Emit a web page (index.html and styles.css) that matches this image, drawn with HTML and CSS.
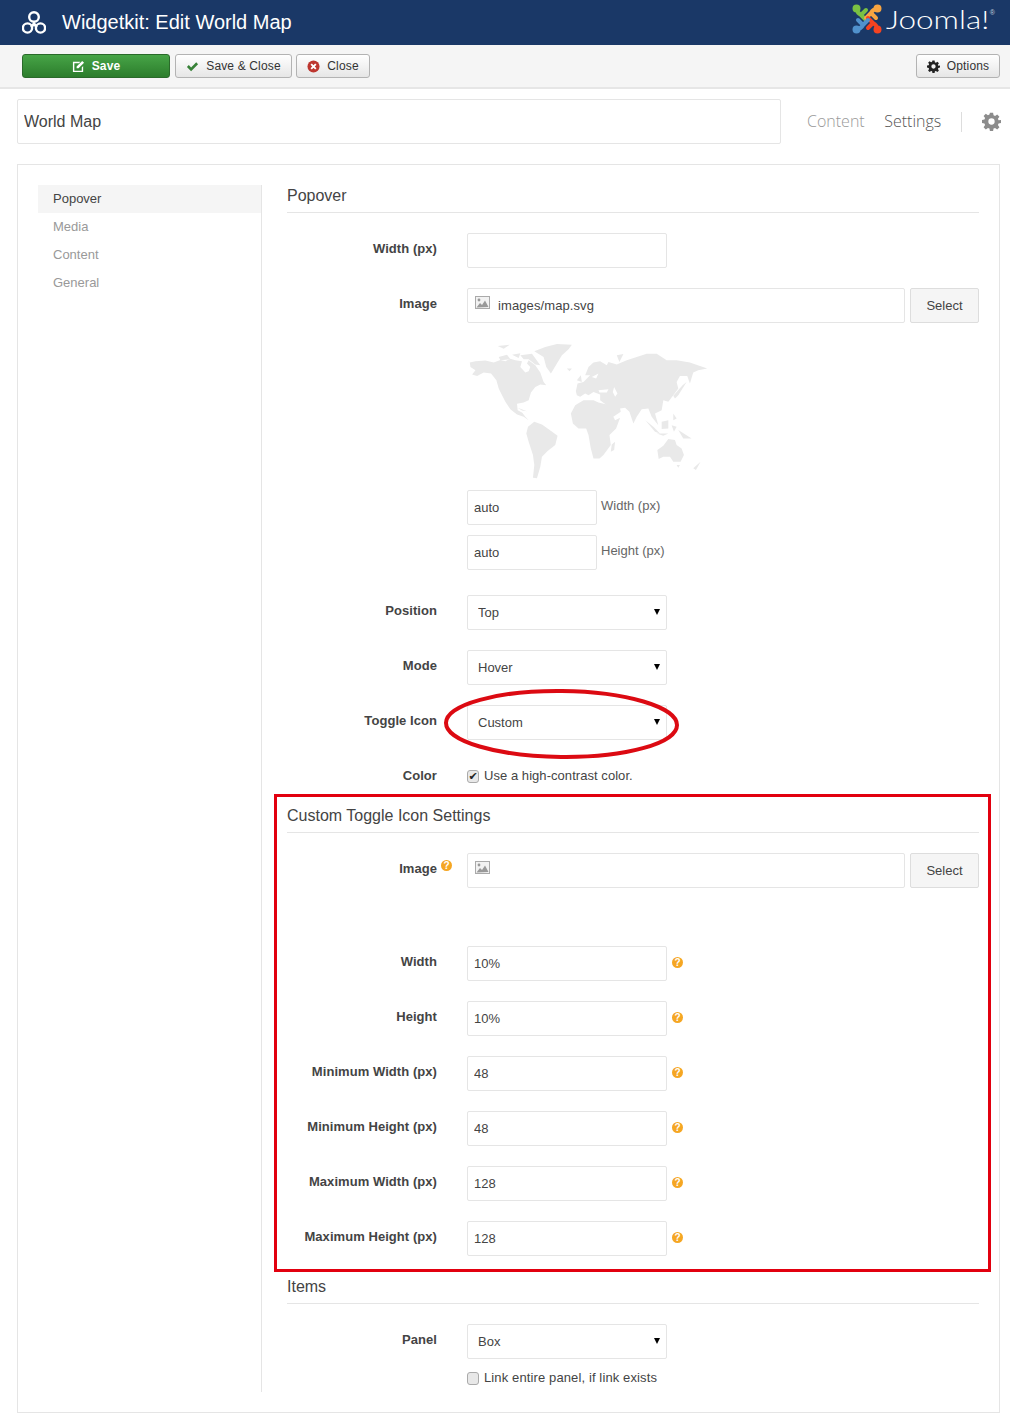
FILE: index.html
```html
<!DOCTYPE html>
<html lang="en">
<head>
<meta charset="utf-8">
<title>Widgetkit: Edit World Map</title>
<link rel="stylesheet" href="styles.css">
</head>
<body>
<svg class="defs" width="0" height="0" aria-hidden="true">
  <symbol id="gear" viewBox="0 0 24 24">
    <path d="M10 1h4l.6 3.2 1.900.8 2.700-1.900 2.800 2.800-1.900 2.700.8 1.900L24 10v4l-3.100.6-.8 1.900 1.900 2.700-2.800 2.800-2.700-1.900-1.900.8L14 24h-4l-.6-3.100-1.900-.8-2.700 1.900-2.800-2.800 1.900-2.700-.8-1.900L0 14v-4l3.100-.5.8-1.900L2 4.900l2.800-2.800 2.700 1.900 1.900-.8zM12 8a4 4 0 1 0 0 8 4 4 0 0 0 0-8z" fill-rule="evenodd"/>
  </symbol>
  <symbol id="pic" viewBox="0 0 15 13">
    <rect x=".5" y=".5" width="14" height="12" fill="#f2f2f2" stroke="#aaa"/>
    <circle cx="4" cy="4" r="1.400" fill="#999"/>
    <path d="M1.500 11.500 5 7l2 2 3-4.500 3.500 6.500z" fill="#999"/>
  </symbol>
</svg>

<header class="topbar">
  <div class="brand">
    <svg class="wk-logo" viewBox="0 0 24 23" fill="none" stroke="#fff" stroke-width="2.400">
      <circle cx="12" cy="6" r="4.800"/><circle cx="5.500" cy="17" r="4.600"/><circle cx="18.500" cy="17" r="4.600"/>
      <path d="M12 10.500 8 15.500h8z" fill="#fff" stroke="none"/>
    </svg>
    <h1 class="page-title">Widgetkit: Edit World Map</h1>
  </div>
  <div class="joomla">
    <svg class="joomla-mark" viewBox="0 0 30 30" fill="none" stroke-width="4" stroke-linecap="round">
      <g stroke="#7ac143"><path d="M5 5Q5 9 9 11l5 5M9 11l5-5"/><circle cx="4.500" cy="4.500" r="2" fill="#7ac143"/></g>
      <g stroke="#f9a541"><path d="M25 5Q21 5 19 9l-5 5M19 9l5 5"/><circle cx="25.500" cy="4.500" r="2" fill="#f9a541"/></g>
      <g stroke="#f44321"><path d="M25 25Q25 21 21 19l-5-5M21 19l-5 5"/><circle cx="25.500" cy="25.500" r="2" fill="#f44321"/></g>
      <g stroke="#5091cd"><path d="M5 25Q9 25 11 21l5-5M11 21l-5-5"/><circle cx="4.500" cy="25.500" r="2" fill="#5091cd"/></g>
    </svg>
    <span class="joomla-word">Joomla!</span><sup class="joomla-reg">®</sup>
  </div>
</header>

<nav class="toolbar">
  <button class="tb-btn tb-save" type="button">
    <svg class="tb-icon" viewBox="0 0 14 14"><path d="M1 2h8L7.500 3.500H2.500v8h8V8L12 6.500V13H1z" fill="#fff"/><path d="M5 7l6-6 2 2-6 6H5z" fill="#fff"/></svg>Save
  </button>
  <button class="tb-btn tb-saveclose" type="button">
    <svg class="tb-icon" viewBox="0 0 14 14"><path d="M1 7.500 3 5.500 5.500 8 11 2.500 13 4.500 5.500 12z" fill="#378137"/></svg>Save &amp; Close
  </button>
  <button class="tb-btn tb-close" type="button">
    <svg class="tb-icon" viewBox="0 0 14 14"><circle cx="7" cy="7" r="6.500" fill="#bd362f"/><path d="M4.500 4.500l5 5m0-5l-5 5" stroke="#fff" stroke-width="2"/></svg>Close
  </button>
  <button class="tb-btn tb-options" type="button">
    <svg class="tb-icon gear-dark"><use href="#gear"/></svg>Options
  </button>
</nav>

<div class="titlerow">
  <input class="title-input" type="text" value="World Map">
  <div class="tabs">
    <a class="tab">Content</a>
    <a class="tab tab-on">Settings</a>
    <span class="tab-sep"></span>
    <svg class="tab-gear"><use href="#gear"/></svg>
  </div>
</div>

<main class="panel">
  <aside class="side">
    <a class="side-item side-on">Popover</a>
    <a class="side-item">Media</a>
    <a class="side-item">Content</a>
    <a class="side-item">General</a>
  </aside>

  <div class="form">
    <h2 class="sec">Popover</h2>
    <div class="row">
      <label class="lbl">Width (px)</label>
      <input class="inp" type="text">
    </div>
    <div class="row">
      <label class="lbl">Image</label>
      <div class="stack">
        <div class="picker">
          <div class="pick-field"><svg class="pic"><use href="#pic"/></svg><span>images/map.svg</span></div>
          <button class="sel-btn" type="button">Select</button>
        </div>
        <svg class="map" viewBox="20 170 730 415" fill="#e9e9e9" aria-label="World map">
          <path d="M28 232 45 228 75 226 100 232 120 224 135 228 150 220 165 225 185 228 180 245 195 262 205 258 210 245 200 235 205 225 225 240 240 262 250 290 258 300 240 298 225 305 212 322 205 345 190 352 170 356 172 375 186 383 195 395 205 405 190 395 170 388 150 372 135 350 125 330 115 310 108 285 92 265 70 262 50 272 35 268 45 255 30 245Z"/>
          <path d="M112 182 148 178 130 190ZM115 215 140 208 150 222 120 225ZM155 208 180 204 175 218ZM180 210 215 205 240 240 225 238 205 222 190 222Z"/>
          <path d="M222 198 255 185 290 176 335 178 325 192 305 210 290 235 272 265 258 245 250 215Z"/>
          <path d="M320 250 335 250 328 258ZM172 368 200 378 185 376Z"/>
          <path d="M203 425 222 410 245 418 262 430 292 452 285 480 262 498 245 515 240 545 230 580 218 578 222 540 218 510 205 470 198 445Z"/>
          <path d="M332 385 345 360 370 345 400 345 415 352 440 358 450 375 465 405 480 398 468 430 448 450 452 480 430 510 418 520 400 520 392 490 385 450 378 430 355 430 338 415Z"/>
          <path d="M455 478 465 470 462 495 452 500Z"/>
          <path d="M347 318 352 295 370 290 390 270 375 270 385 245 400 232 420 228 440 240 445 230 470 238 500 225 530 215 560 205 590 205 620 225 650 225 690 232 742 250 715 255 700 262 690 295 682 272 660 272 650 290 655 310 640 330 625 350 610 345 605 375 585 385 595 420 575 395 565 370 545 372 530 395 520 415 508 380 495 368 480 370 482 380 455 398 440 360 420 345 420 328 400 320 385 330 375 325 360 335 350 330Z"/>
          <path class="sea" d="M415 315 445 312 440 322 418 322ZM462 305 472 325 465 335 458 320ZM395 275 415 265 408 280Z"/>
          <path d="M470 210 490 206 478 230ZM350 285 362 270 365 290ZM668 300 680 290 655 330 645 340 640 332Z"/>
          <path d="M556 405 580 425 600 445 585 440ZM590 445 625 445 610 452ZM605 410 625 405 625 430 605 432ZM635 420 650 425 642 440ZM655 435 695 460 670 460ZM640 385 650 400 640 405Z"/>
          <path d="M592 495 610 482 625 462 645 465 650 480 665 490 672 510 662 530 640 530 630 515 610 515 596 522Z"/>
          <path d="M700 550 722 530 708 555ZM650 540 660 540 655 548Z"/>
        </svg>
        <div class="dim"><input class="inp inp-dim" type="text" value="auto"><span class="dim-lbl">Width (px)</span></div>
        <div class="dim"><input class="inp inp-dim" type="text" value="auto"><span class="dim-lbl">Height (px)</span></div>
      </div>
    </div>
    <div class="row row-after-stack">
      <label class="lbl">Position</label>
      <div class="sel"><select class="sel-in"><option>Top</option></select></div>
    </div>
    <div class="row">
      <label class="lbl">Mode</label>
      <div class="sel"><select class="sel-in"><option>Hover</option></select></div>
    </div>
    <div class="row">
      <label class="lbl">Toggle Icon</label>
      <div class="sel"><select class="sel-in"><option>Custom</option></select></div>
    </div>
    <div class="row row-check">
      <label class="lbl">Color</label>
      <label class="chk"><input class="box" type="checkbox" checked>Use a high-contrast color.</label>
    </div>

    <h2 class="sec">Custom Toggle Icon Settings</h2>
    <div class="row row-tall">
      <label class="lbl">Image<span class="help help-lbl">?</span></label>
      <div class="picker">
        <div class="pick-field"><svg class="pic"><use href="#pic"/></svg></div>
        <button class="sel-btn" type="button">Select</button>
      </div>
    </div>
    <div class="row"><label class="lbl">Width</label><input class="inp" type="text" value="10%"><span class="help">?</span></div>
    <div class="row"><label class="lbl">Height</label><input class="inp" type="text" value="10%"><span class="help">?</span></div>
    <div class="row"><label class="lbl">Minimum Width (px)</label><input class="inp" type="text" value="48"><span class="help">?</span></div>
    <div class="row"><label class="lbl">Minimum Height (px)</label><input class="inp" type="text" value="48"><span class="help">?</span></div>
    <div class="row"><label class="lbl">Maximum Width (px)</label><input class="inp" type="text" value="128"><span class="help">?</span></div>
    <div class="row"><label class="lbl">Maximum Height (px)</label><input class="inp" type="text" value="128"><span class="help">?</span></div>

    <h2 class="sec">Items</h2>
    <div class="row row-panel">
      <label class="lbl">Panel</label>
      <div class="stack stack-panel">
        <div class="sel"><select class="sel-in"><option>Box</option></select></div>
        <label class="chk"><input class="box" type="checkbox">Link entire panel, if link exists</label>
      </div>
    </div>
  </div>
</main>

<div class="mark-rect"></div>
<svg class="mark-oval" viewBox="0 0 240 74" fill="none"><ellipse cx="119.500" cy="37" rx="115.500" ry="33" stroke="#dc0a12" stroke-width="4" transform="rotate(.6 120 37)"/></svg>
</body>
</html>
```
FILE: styles.css
```css
* { box-sizing: border-box; }
html, body { margin: 0; padding: 0; }
body { position: relative; width: 1010px; height: 1419px; overflow: hidden; background: #fff; color: #444; font: 13px/16px "Liberation Sans", Arial, sans-serif; }
.defs { position: absolute; }

/* top bar */
.topbar { height: 45px; background: #1a3867; display: flex; justify-content: space-between; padding: 0 15px 0 22px; }
.brand { display: flex; align-items: center; gap: 16px; }
.wk-logo { width: 24px; height: 23px; }
.page-title { margin: 0; color: #fff; font-size: 20px; font-weight: 400; line-height: 45px; }
.joomla { display: flex; align-items: flex-start; padding-top: 4px; }
.joomla-mark { width: 30px; height: 30px; }
.joomla-word { width: 104px; margin-left: 4px; color: #fff; font: 300 25px/30px Lato, "Liberation Sans", sans-serif; transform: scaleX(1.26); transform-origin: left; }
.joomla-reg { color: #c5cfdd; font-size: 7px; line-height: 12px; margin-top: 3px; }

/* toolbar */
.toolbar { height: 44px; background: #f5f5f5; border-bottom: 2px solid #e6e6e6; display: flex; align-items: flex-start; gap: 5px; padding: 9px 10px 0 22px; }
.tb-btn { height: 24px; display: flex; align-items: center; justify-content: center; gap: 7px; padding: 0; border: 1px solid #b3b3b3; border-radius: 3px; background: linear-gradient(#fff, #e6e6e6); color: #333; font: 12px/16px "Liberation Sans", Arial, sans-serif; letter-spacing: .15px; }
.tb-icon { width: 13px; height: 13px; fill: #222; }
.tb-save { width: 148px; background: linear-gradient(#47a447, #2c7d2c); border-color: #2a6a2a; color: #fff; font-weight: 700; }
.tb-saveclose { width: 117px; }
.tb-close { width: 74px; margin-left: -1px; }
.tb-options { width: 84px; margin-left: auto; }

/* title row */
.titlerow { display: flex; align-items: center; height: 45px; margin: 10px 0 20px 17px; }
.title-input { width: 764px; height: 45px; padding: 0 6px; border: 1px solid #e5e5e5; border-radius: 2px; color: #444; font: 16px "Liberation Sans", Arial, sans-serif; }
.tabs { display: flex; align-items: center; margin-left: 26px; }
.tab { font: 300 16px/24px "Open Sans", sans-serif; color: #999; margin: -2px 19.500px 0 0; }
.tab-on { color: #555; }
.tab-sep { width: 1px; height: 20px; background: #ddd; }
.tab-gear { width: 19px; height: 19px; fill: #8c8c8c; margin-left: 20px; }

/* panel */
.panel { display: flex; width: 983px; height: 1249px; margin-left: 17px; padding: 20px; border: 1px solid #e5e5e5; }
.side { flex: none; width: 224px; border-right: 1px solid #e5e5e5; }
.side-item { display: block; height: 28px; padding-left: 15px; line-height: 28px; color: #999; }
.side-on { background: #f5f5f5; color: #444; }
.form { flex: 1; margin-left: 25px; }
.sec { margin: 0 0 20px; height: 28px; padding-top: 1px; border-bottom: 1px solid #e5e5e5; font-size: 16px; font-weight: 400; line-height: 20px; }

/* rows */
.row { display: flex; align-items: flex-start; margin-bottom: 20px; position: relative; }
.row-after-stack { margin-top: 25px; }
.row-check { height: 25px; }
.row-tall { margin-bottom: 58px; }
.row-panel { margin-bottom: 0; }
.lbl { flex: none; width: 150px; margin-right: 30px; padding-top: 8px; text-align: right; font-weight: 700; letter-spacing: .06px; position: relative; }
.stack { flex: 1; display: flex; flex-direction: column; }
.stack-panel { gap: 11px; }
.inp { width: 200px; height: 35px; padding: 0 6px; border: 1px solid #e5e5e5; border-radius: 2px; color: #444; background: #fff; font: 13px "Liberation Sans", Arial, sans-serif; }
.picker { flex: 1; display: flex; justify-content: space-between; }
.pick-field { width: 438px; height: 35px; display: flex; align-items: flex-start; border: 1px solid #e5e5e5; border-radius: 2px; padding: 7px 7px 0; }
.pick-field span { margin: 2px 0 0 8px; letter-spacing: .1px; }
.pic { width: 15px; height: 13px; }
.sel-btn { width: 69px; height: 35px; border: 1px solid #ddd; border-radius: 2px; background: #f5f5f5; color: #444; font: 13px "Liberation Sans", Arial, sans-serif; }
.map { display: block; width: 243px; height: 138px; margin: 19px 0 10px; }
.sea { fill: #fff; }
.dim { display: flex; align-items: flex-start; margin-bottom: 10px; }
.dim:last-child { margin-bottom: 0; }
.inp-dim { width: 130px; }
.dim-lbl { margin-left: 4px; padding-top: 8px; color: #666; }

.sel { position: relative; width: 200px; height: 35px; }
.sel::after { content: ""; position: absolute; right: 7px; top: 14px; border: 3.500px solid transparent; border-top: 6px solid #000; border-bottom: 0; }
.sel-in { width: 100%; height: 100%; appearance: none; padding: 0 10px; border: 1px solid #e5e5e5; border-radius: 2px; background: #fff; color: #444; font: 13px "Liberation Sans", Arial, sans-serif; }

.chk { display: flex; align-items: center; height: 16px; margin-top: 8px; color: #444; letter-spacing: .05px; }
.stack .chk { margin-top: 0; letter-spacing: .12px; }
.box { appearance: none; width: 12px; height: 13px; margin: 0 5px 0 0; border: 1px solid #aaa; border-radius: 3px; background: #e8e8e8; display: flex; align-items: center; justify-content: center; }
.box:checked::after { content: "✔"; font: 11px/11px "DejaVu Sans", sans-serif; color: #222; }

.help { flex: none; width: 11px; height: 11px; margin: 11px 0 0 5px; border-radius: 50%; background: #f5a623; color: #fff; font: 700 10px/11px "Liberation Sans", Arial, sans-serif; text-align: center; letter-spacing: 0; }
.help-lbl { position: absolute; left: 154px; top: 7px; margin: 0; }

/* annotations painted over the screenshot */
.mark-rect { position: absolute; left: 274px; top: 794px; width: 717px; height: 478px; border: 3px solid #e2000f; pointer-events: none; }
.mark-oval { position: absolute; left: 442px; top: 687px; width: 240px; height: 74px; pointer-events: none; }
```
